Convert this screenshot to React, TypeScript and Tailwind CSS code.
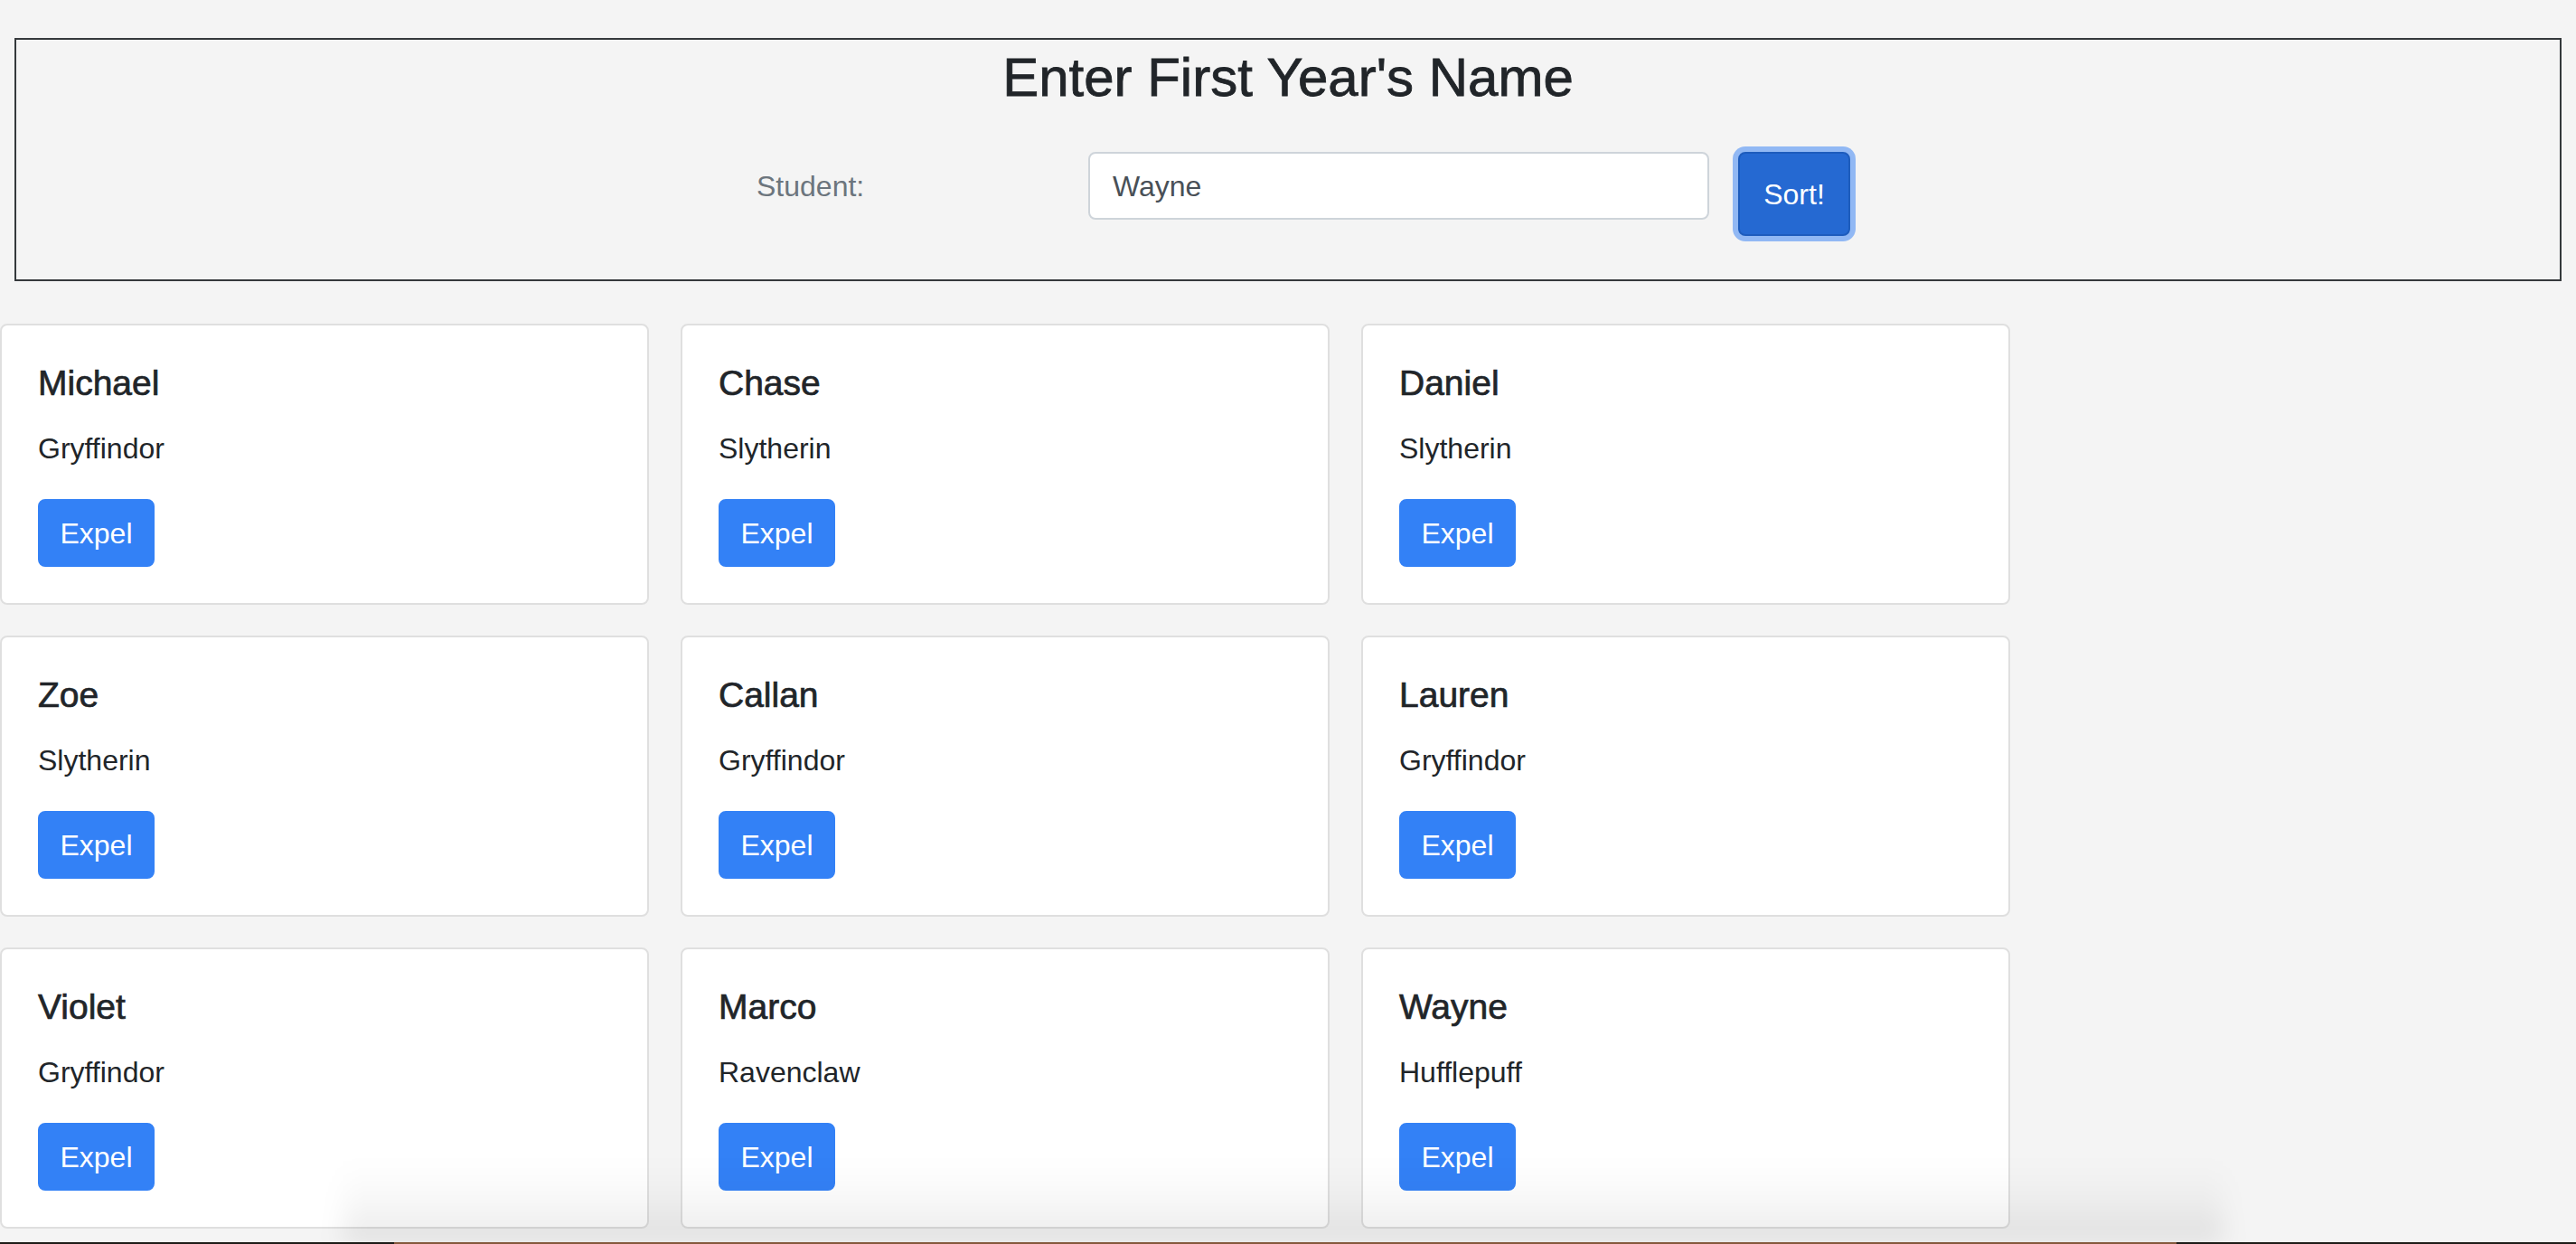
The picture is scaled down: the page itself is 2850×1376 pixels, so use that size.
import React from 'react';

interface Student {
  name: string;
  house: string;
}

const students: Student[] = [
  { name: 'Michael', house: 'Gryffindor' },
  { name: 'Chase', house: 'Slytherin' },
  { name: 'Daniel', house: 'Slytherin' },
  { name: 'Zoe', house: 'Slytherin' },
  { name: 'Callan', house: 'Gryffindor' },
  { name: 'Lauren', house: 'Gryffindor' },
  { name: 'Violet', house: 'Gryffindor' },
  { name: 'Marco', house: 'Ravenclaw' },
  { name: 'Wayne', house: 'Hufflepuff' },
];

function StudentCard({ name, house }: Student) {
  return (
    <div className="bg-white border-2 border-[#dfdfdf] rounded-[8px] p-[40px]">
      <h5 className="text-[39px] leading-[48px] font-medium text-[#212529] mb-[24px] [-webkit-text-stroke:0.7px_#212529]">
        {name}
      </h5>
      <p className="text-[32px] leading-[48px] text-[#212529] mb-[32px]">{house}</p>
      <button className="w-[129px] h-[75px] bg-[#3381f6] border-2 border-[#3381f6] rounded-[8px] text-white text-[32px] leading-[48px]">
        Expel
      </button>
    </div>
  );
}

export default function App() {
  return (
    <div
      className="relative h-screen flex flex-col bg-[#f4f4f4] overflow-hidden"
      style={{ fontFamily: '"Liberation Sans", Arial, sans-serif' }}
    >
      <div className="mt-[42px] mx-[16px] border-2 border-[#35393c] pt-[6px] pb-[48px]">
        <h2 className="text-center text-[60px] leading-[72px] text-[#212529] [-webkit-text-stroke:0.8px_#212529]">
          Enter First Year's Name
        </h2>

        <div className="flex items-start mt-[46px] pl-[819px]">
          <label className="w-[367px] h-[75px] flex items-center text-[32px] text-[#6c757d]">
            Student:
          </label>
          <div className="w-[687px] h-[75px] flex items-center bg-white border-2 border-[#ced4da] rounded-[8px] px-[25px] text-[32px] text-[#495057]">
            Wayne
          </div>
          <button className="ml-[32px] w-[124px] h-[93px] bg-[#2569d2] border-2 border-[#1d5cbd] rounded-[8px] ring-[6px] ring-[#91b8f4] text-white text-[32px]">
            Sort!
          </button>
        </div>
      </div>

      <div className="grid grid-cols-[718px_718px_718px] gap-x-[35px] gap-y-[34px] mt-[47px]">
        {students.map((s) => (
          <StudentCard key={s.name} name={s.name} house={s.house} />
        ))}
      </div>

      <div className="flex-1" />

      {/* window shadow + desktop peeking out below */}
      <div className="pointer-events-none absolute bottom-0 left-[380px] w-[2080px] h-[90px] bg-gradient-to-b from-transparent via-black/[0.03] to-black/[0.09] blur-[14px]" />
      <div className="h-[2px] flex">
        <div className="w-[436px] bg-[#1f1d18]" />
        <div className="w-[1972px] bg-[#8b5d3f]" />
        <div className="flex-1 bg-[#1f1d18]" />
      </div>
    </div>
  );
}
